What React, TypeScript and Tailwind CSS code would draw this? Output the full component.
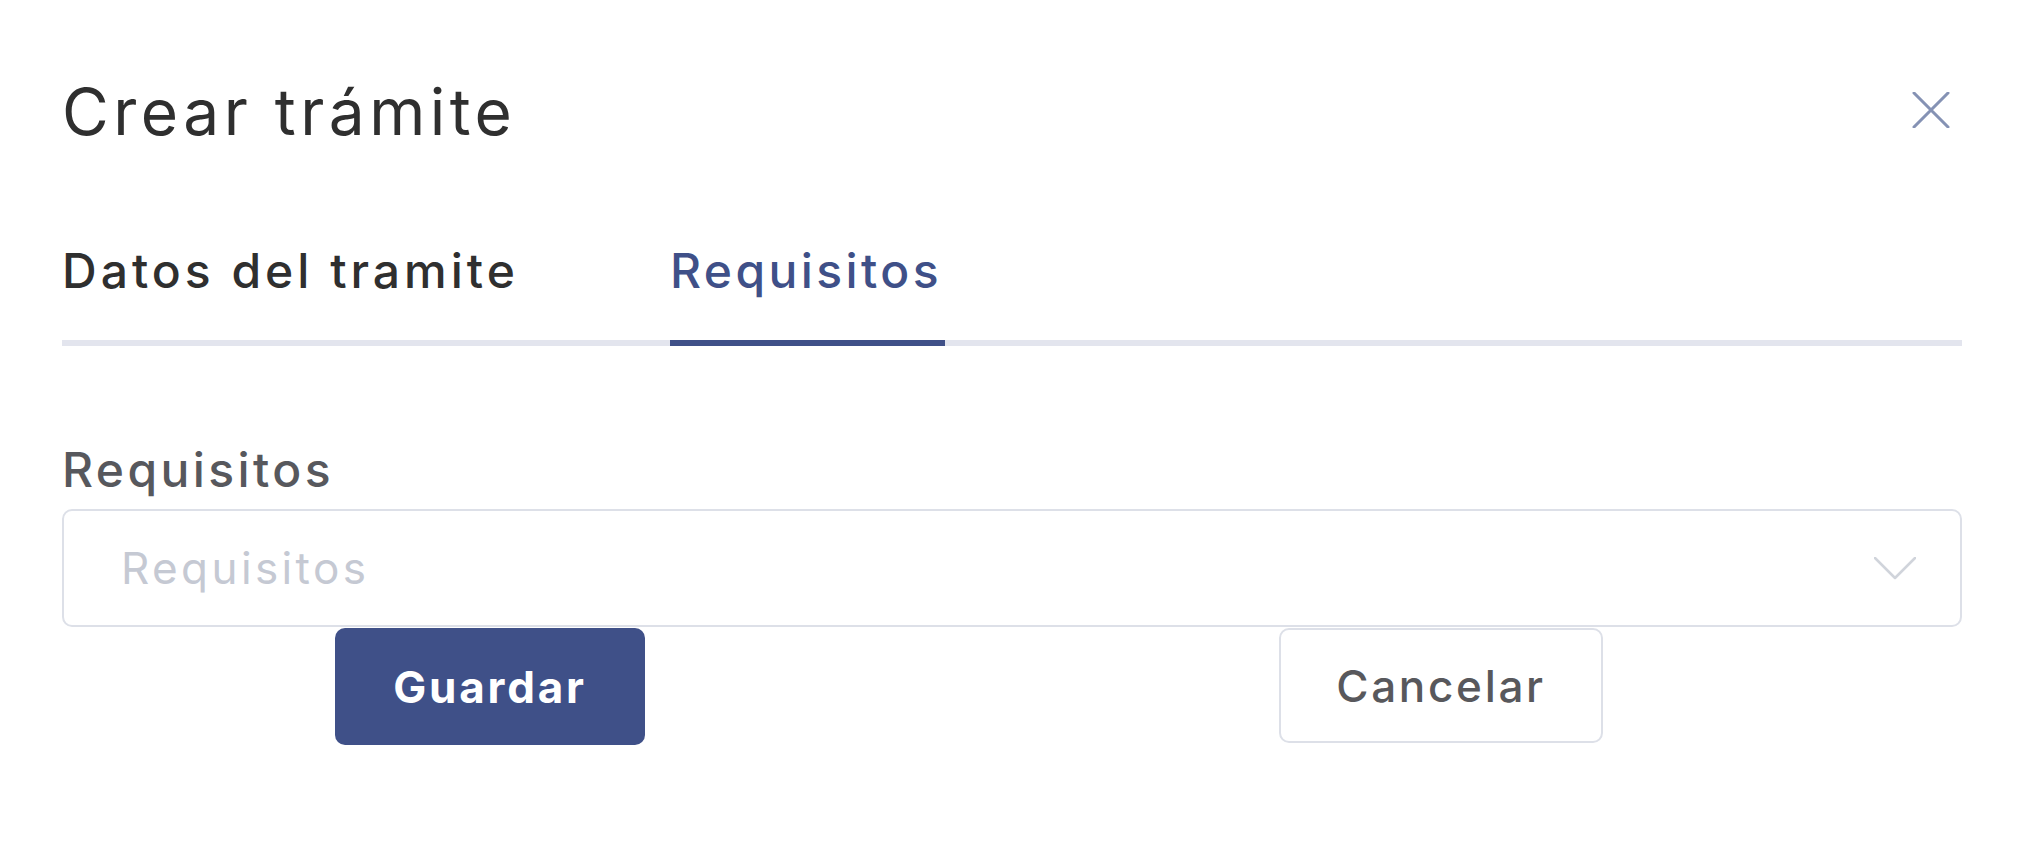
import React from "react";

export default function App() {
  return (
    <div
      className="w-[2023px] h-[841px] bg-white pt-[80px] pl-[62px] pr-[61px]"
      style={{ fontFamily: "Inter, 'Noto Sans', sans-serif" }}
    >
      <div className="flex items-start justify-between">
        <h1 className="text-[64px] leading-none font-normal text-[#2f2f2f] tracking-[4.5px]">
          Crear trámite
        </h1>
        <button className="mt-[12px] mr-[12px] w-[38px] h-[36px] flex items-center justify-center">
          <svg width="38" height="36" viewBox="0 0 38 36" fill="none">
            <path d="M2 1 L36 35 M36 1 L2 35" stroke="#8592b4" strokeWidth="3" strokeLinecap="round" />
          </svg>
        </button>
      </div>

      <div className="mt-[103px] flex border-b-[6px] border-[#e3e5ee]">
        <button className="w-[608px] text-left pb-[45px] -mb-[6px] border-b-[6px] border-transparent text-[48px] leading-none font-medium tracking-[4px] text-[#2f2f2f]">
          Datos del tramite
        </button>
        <button className="w-[275px] text-left pb-[45px] -mb-[6px] border-b-[6px] border-[#3f5088] text-[48px] leading-none font-medium tracking-[3.4px] text-[#3f5088]">
          Requisitos
        </button>
      </div>

      <label className="block mt-[100px] text-[48px] leading-none font-medium tracking-[3.4px] text-[#57585d]">
        Requisitos
      </label>

      <div className="mt-[15px] h-[118px] border-2 border-[#dde0e8] rounded-[10px] flex items-center justify-between pl-[57px] pr-[44px]">
        <span className="text-[44px] leading-none tracking-[3.4px] text-[#c5c9d3]">Requisitos</span>
        <svg width="42" height="23" viewBox="0 0 42 23" fill="none">
          <path d="M1 1 L21 21 L41 1" stroke="#d0d4db" strokeWidth="2.5" strokeLinecap="round" strokeLinejoin="round" />
        </svg>
      </div>

      <div className="mt-[1px] flex items-start">
        <button className="ml-[273px] w-[310px] h-[117px] rounded-[10px] bg-[#3f5088] text-white text-[44px] font-bold leading-none tracking-[2.8px]">
          Guardar
        </button>
        <button className="ml-[634px] w-[324px] h-[115px] rounded-[10px] border-2 border-[#dde0e8] bg-white text-[#58585c] text-[44px] font-medium leading-none tracking-[2.7px]">
          Cancelar
        </button>
      </div>
    </div>
  );
}
